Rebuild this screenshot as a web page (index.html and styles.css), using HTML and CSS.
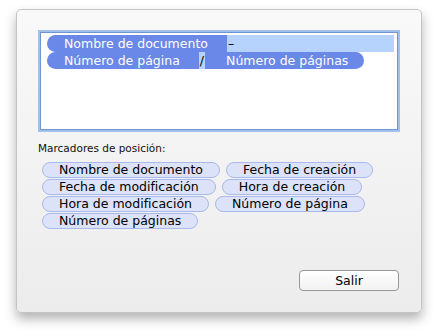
FILE: index.html
```html
<!DOCTYPE html>
<html lang="es">
<head>
  <meta charset="UTF-8" />
  <title>Marcadores de posición</title>
  <link rel="stylesheet" href="styles.css">
</head>
<body>
  <div class="sheet">
    <div class="field">
      <div class="line"><span class="tok tok-l">Nombre de documento</span><span class="sel fill">–</span></div>
      <div class="line"><span class="tok tok-l">Número de página</span><span class="sel">/</span><span class="tok tok-r">Número de páginas</span></div>
    </div>

    <p class="caption">Marcadores de posición:</p>

    <div class="chips">
      <span class="chip">Nombre de documento</span>
      <span class="chip">Fecha de creación</span>
      <span class="chip">Fecha de modificación</span>
      <span class="chip">Hora de creación</span>
      <span class="chip">Hora de modificación</span>
      <span class="chip">Número de página</span>
      <span class="chip">Número de páginas</span>
    </div>

    <div class="actions">
      <button class="btn">Salir</button>
    </div>
  </div>
</body>
</html>
```
FILE: styles.css
```css
html, body {
  margin: 0;
  background: #fff;
}

body {
  width: 438px;
  height: 335px;
  overflow: hidden;
  font-family: "DejaVu Sans", "Liberation Sans", sans-serif;
}

.sheet {
  box-sizing: border-box;
  margin: 9px 0 0 16px;
  width: 406px;
  height: 304px;
  border: 1px solid #c4c4c4;
  border-radius: 5px;
  background: linear-gradient(#f9f9f9, #ececec);
  box-shadow: 0 6px 12px rgba(0, 0, 0, 0.3);
  padding: 22px 23px 0 23px;
  display: flex;
  flex-direction: column;
}

.field {
  box-sizing: border-box;
  width: 358px;
  height: 98px;
  background: #fff;
  border: 1px solid #6e96d3;
  box-shadow: 0 0 0 2px #a3c0ea;
  padding: 2px 3px 0 6px;
  font-size: 12.5px;
}

.line {
  display: flex;
  height: 17px;
  line-height: 17px;
}

.tok {
  background: #6a88e7;
  color: #fff;
  padding: 0 19px 0 17px;
}

.tok-l {
  border-radius: 9px 0 0 9px;
}

.tok-r {
  border-radius: 0 9px 9px 0;
  padding: 0 16px 0 21px;
}

.sel {
  background: #b6d3fd;
  color: #000;
  padding: 0 1px;
}

.fill {
  flex: 1;
}

.caption {
  margin: 12px 0 0 -2px;
  font-size: 10.5px;
  color: #111;
}

.chips {
  display: flex;
  flex-wrap: wrap;
  gap: 1px 6px;
  margin: 8px 0 0 2px;
  width: 358px;
}

.chip {
  box-sizing: border-box;
  height: 16px;
  line-height: 14px;
  padding: 0 16px;
  border: 1px solid #a9b9eb;
  border-radius: 8px;
  background: #dce3f9;
  font-size: 12.5px;
  color: #000;
}

.actions {
  margin-top: auto;
  margin-bottom: 21px;
  display: flex;
  justify-content: flex-end;
  margin-right: -1px;
}

.btn {
  width: 100px;
  height: 21px;
  border: 1px solid #979797;
  border-radius: 4px;
  background: linear-gradient(#fff, #f1f1f1);
  font-family: "DejaVu Sans", "Liberation Sans", sans-serif;
  font-size: 12.5px;
  color: #000;
  padding: 0;
}
```
